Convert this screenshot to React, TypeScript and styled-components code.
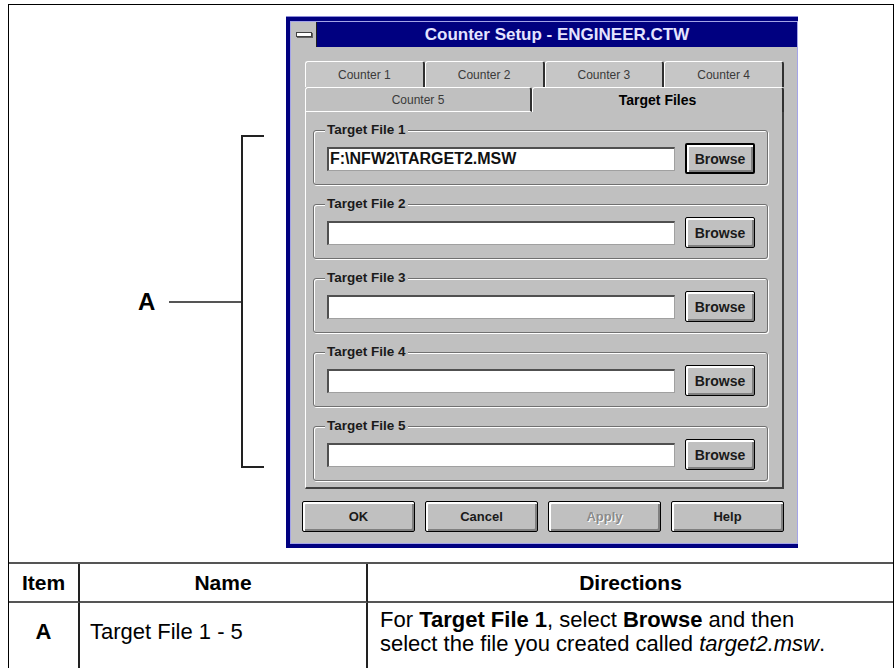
import React from 'react'
import styled, { createGlobalStyle } from 'styled-components'

const GlobalStyle = createGlobalStyle`
  html, body {
    margin: 0;
    padding: 0;
    background: #fff;
  }
  body {
    font-family: "Liberation Sans", Arial, sans-serif;
    overflow: hidden;
  }
`

const Frame = styled.div`
  margin: 4px 0 0 8px;
  width: 886px;
  box-sizing: border-box;
  border: 1px solid #000;
  border-bottom: none;
`

const Figure = styled.div`
  height: 557px;
  box-sizing: border-box;
  padding-top: 12px;
  display: flex;
  align-items: flex-start;
`

const Callout = styled.div`
  margin-top: 118px;
  height: 333px;
  display: flex;
  align-items: center;
`

const CalloutLetter = styled.span`
  margin-left: 129px;
  width: 20px;
  font-size: 24px;
  font-weight: 700;
  color: #000;
`

const Leader = styled.span`
  margin-left: 11px;
  width: 72px;
  height: 2px;
  background: #555;
`

const Bracket = styled.span`
  width: 23px;
  height: 100%;
  box-sizing: border-box;
  border: 2px solid #222;
  border-right: none;
`

const Window = styled.div`
  margin-left: 22px;
  width: 512px;
  height: 531px;
  box-sizing: border-box;
  border: 4px solid #000080;
  box-shadow: 0 -1px 0 #8c8cd8;
  display: flex;
`

const WindowInner = styled.div`
  flex: 1;
  display: flex;
  flex-direction: column;
  border: 1px solid #a4a4e8;
`

const TitleBar = styled.div`
  height: 25px;
  display: flex;
  background: #000080;
`

const ControlBox = styled.div`
  width: 25px;
  background: #c0c0c0;
  border-right: 1px solid #202020;
  display: flex;
  align-items: center;
  justify-content: center;
`

const ControlDash = styled.span`
  width: 14px;
  height: 3px;
  background: #fff;
  border: 1px solid #404040;
  box-shadow: 1px 1px 0 #606060;
`

const Title = styled.div`
  flex: 1;
  display: flex;
  align-items: center;
  justify-content: center;
  color: #e4e4ff;
  font-size: 17px;
  font-weight: 700;
`

const Client = styled.div`
  flex: 1;
  background: #c0c0c0;
  padding: 14px 13px 0 11px;
  display: flex;
  flex-direction: column;
`

const TabStrip = styled.div`
  margin-left: 3px;
  display: flex;
  flex-direction: column;
`

const TabRow = styled.div<{ $height: number }>`
  height: ${p => p.$height}px;
  display: flex;
`

const Tab = styled.div<{ $grow: number; $active?: boolean; $front?: boolean }>`
  flex: ${p => p.$grow};
  box-sizing: border-box;
  display: flex;
  align-items: center;
  justify-content: center;
  border-top: 1px solid #fff;
  border-left: 1px solid #fff;
  border-right: 2px solid #303030;
  border-bottom: ${p => (p.$front && !p.$active ? '1px solid #fff' : 'none')};
  border-radius: 3px 3px 0 0;
  background: ${p => (p.$front ? '#c0c0c0' : '#c6c6c6')};
  color: ${p => (p.$active ? '#000' : '#3a3a3a')};
  font-size: ${p => (p.$active ? 14 : 12)}px;
  font-weight: ${p => (p.$active ? 700 : 400)};
`

const Panel = styled.div`
  height: 377px;
  box-sizing: border-box;
  border-left: 1px solid #fff;
  border-right: 2px solid #404040;
  border-bottom: 2px solid #404040;
  padding: 0 14px 0 7px;
  display: flex;
  flex-direction: column;
  gap: 11px;
`

const Group = styled.fieldset`
  margin: 0;
  padding: 5px 9px 10px 13px;
  border: 1px solid #707070;
  border-radius: 3px;
  box-shadow: inset 1px 1px 0 #fff, 1px 1px 0 #fff;
  display: flex;
  align-items: center;
  gap: 10px;
  &:first-child {
    margin-top: 10px;
  }
`

const GroupLabel = styled.legend`
  margin-left: -2px;
  padding: 0 2px;
  background: #c0c0c0;
  font-size: 13.5px;
  line-height: 16px;
  font-weight: 700;
  color: #1a1a1a;
`

const FileField = styled.div`
  width: 348px;
  height: 24px;
  box-sizing: border-box;
  background: #fff;
  border-top: 2px solid #505050;
  border-left: 2px solid #505050;
  border-right: 1px solid #a0a0a0;
  border-bottom: 1px solid #a0a0a0;
  padding-left: 1px;
  display: flex;
  align-items: center;
  font-size: 16px;
  font-weight: 700;
  color: #111;
`

const WinButton = styled.div<{ $width: number; $height: number; $default?: boolean; $disabled?: boolean }>`
  width: ${p => p.$width}px;
  height: ${p => p.$height}px;
  box-sizing: border-box;
  border: ${p => (p.$default ? 2 : 1)}px solid #000;
  border-radius: 2px;
  background: #c0c0c0;
  box-shadow: inset 2px 2px 0 #fff, inset -2px -2px 0 #808080;
  display: flex;
  align-items: center;
  justify-content: center;
  font-size: ${p => (p.$width > 100 ? 13 : 14)}px;
  font-weight: 700;
  color: ${p => (p.$disabled ? '#8a8a8a' : '#1a1a1a')};
  text-shadow: ${p => (p.$disabled ? '1px 1px 0 #fff' : 'none')};
`

const ButtonBar = styled.div`
  margin-top: 12px;
  display: flex;
  gap: 10px;
`

const Table = styled.div`
  display: grid;
  grid-template-columns: 71px 288px 1fr;
  border-top: 2px solid #555;
`

const HeadCell = styled.div<{ $last?: boolean }>`
  height: 39px;
  box-sizing: border-box;
  display: flex;
  align-items: center;
  justify-content: center;
  border-right: ${p => (p.$last ? 'none' : '2px solid #222')};
  border-bottom: 2px solid #555;
  font-size: 21px;
  font-weight: 700;
  color: #000;
`

const BodyCell = styled.div<{ $align: 'center' | 'left'; $last?: boolean; $pad: number }>`
  height: 72px;
  box-sizing: border-box;
  padding: 4px 0 18px ${p => p.$pad}px;
  display: flex;
  align-items: center;
  justify-content: ${p => (p.$align === 'center' ? 'center' : 'flex-start')};
  border-right: ${p => (p.$last ? 'none' : '2px solid #222')};
  font-size: 22px;
  line-height: 24px;
  color: #000;
`

const ItemLetter = styled.span`
  font-weight: 700;
`

const files = [
  { label: 'Target File 1', value: 'F:\\NFW2\\TARGET2.MSW' },
  { label: 'Target File 2', value: '' },
  { label: 'Target File 3', value: '' },
  { label: 'Target File 4', value: '' },
  { label: 'Target File 5', value: '' },
]

const CounterSetup = () => (
  <Window>
    <WindowInner>
      <TitleBar>
        <ControlBox>
          <ControlDash />
        </ControlBox>
        <Title>Counter Setup - ENGINEER.CTW</Title>
      </TitleBar>
      <Client>
        <TabStrip>
          <TabRow $height={26}>
            <Tab $grow={1}>Counter 1</Tab>
            <Tab $grow={1}>Counter 2</Tab>
            <Tab $grow={1}>Counter 3</Tab>
            <Tab $grow={1}>Counter 4</Tab>
          </TabRow>
          <TabRow $height={25}>
            <Tab $grow={225} $front>Counter 5</Tab>
            <Tab $grow={250} $front $active>Target Files</Tab>
          </TabRow>
          <Panel>
            {files.map((f, i) => (
              <Group key={f.label}>
                <GroupLabel>{f.label}</GroupLabel>
                <FileField>{f.value}</FileField>
                <WinButton $width={70} $height={31} $default={i === 0}>Browse</WinButton>
              </Group>
            ))}
          </Panel>
        </TabStrip>
        <ButtonBar>
          <WinButton $width={113} $height={31}>OK</WinButton>
          <WinButton $width={113} $height={31}>Cancel</WinButton>
          <WinButton $width={113} $height={31} $disabled>Apply</WinButton>
          <WinButton $width={113} $height={31}>Help</WinButton>
        </ButtonBar>
      </Client>
    </WindowInner>
  </Window>
)

export default function App() {
  return (
    <>
      <GlobalStyle />
      <Frame>
        <Figure>
          <Callout>
            <CalloutLetter>A</CalloutLetter>
            <Leader />
            <Bracket />
          </Callout>
          <CounterSetup />
        </Figure>
        <Table>
          <HeadCell>Item</HeadCell>
          <HeadCell>Name</HeadCell>
          <HeadCell $last>Directions</HeadCell>
          <BodyCell $align="center" $pad={0}>
            <ItemLetter>A</ItemLetter>
          </BodyCell>
          <BodyCell $align="left" $pad={10}>Target File 1 - 5</BodyCell>
          <BodyCell $align="left" $pad={12} $last>
            <span>
              For <b>Target File 1</b>, select <b>Browse</b> and then
              <br />
              select the file you created called <i>target2.msw</i>.
            </span>
          </BodyCell>
        </Table>
      </Frame>
    </>
  )
}
